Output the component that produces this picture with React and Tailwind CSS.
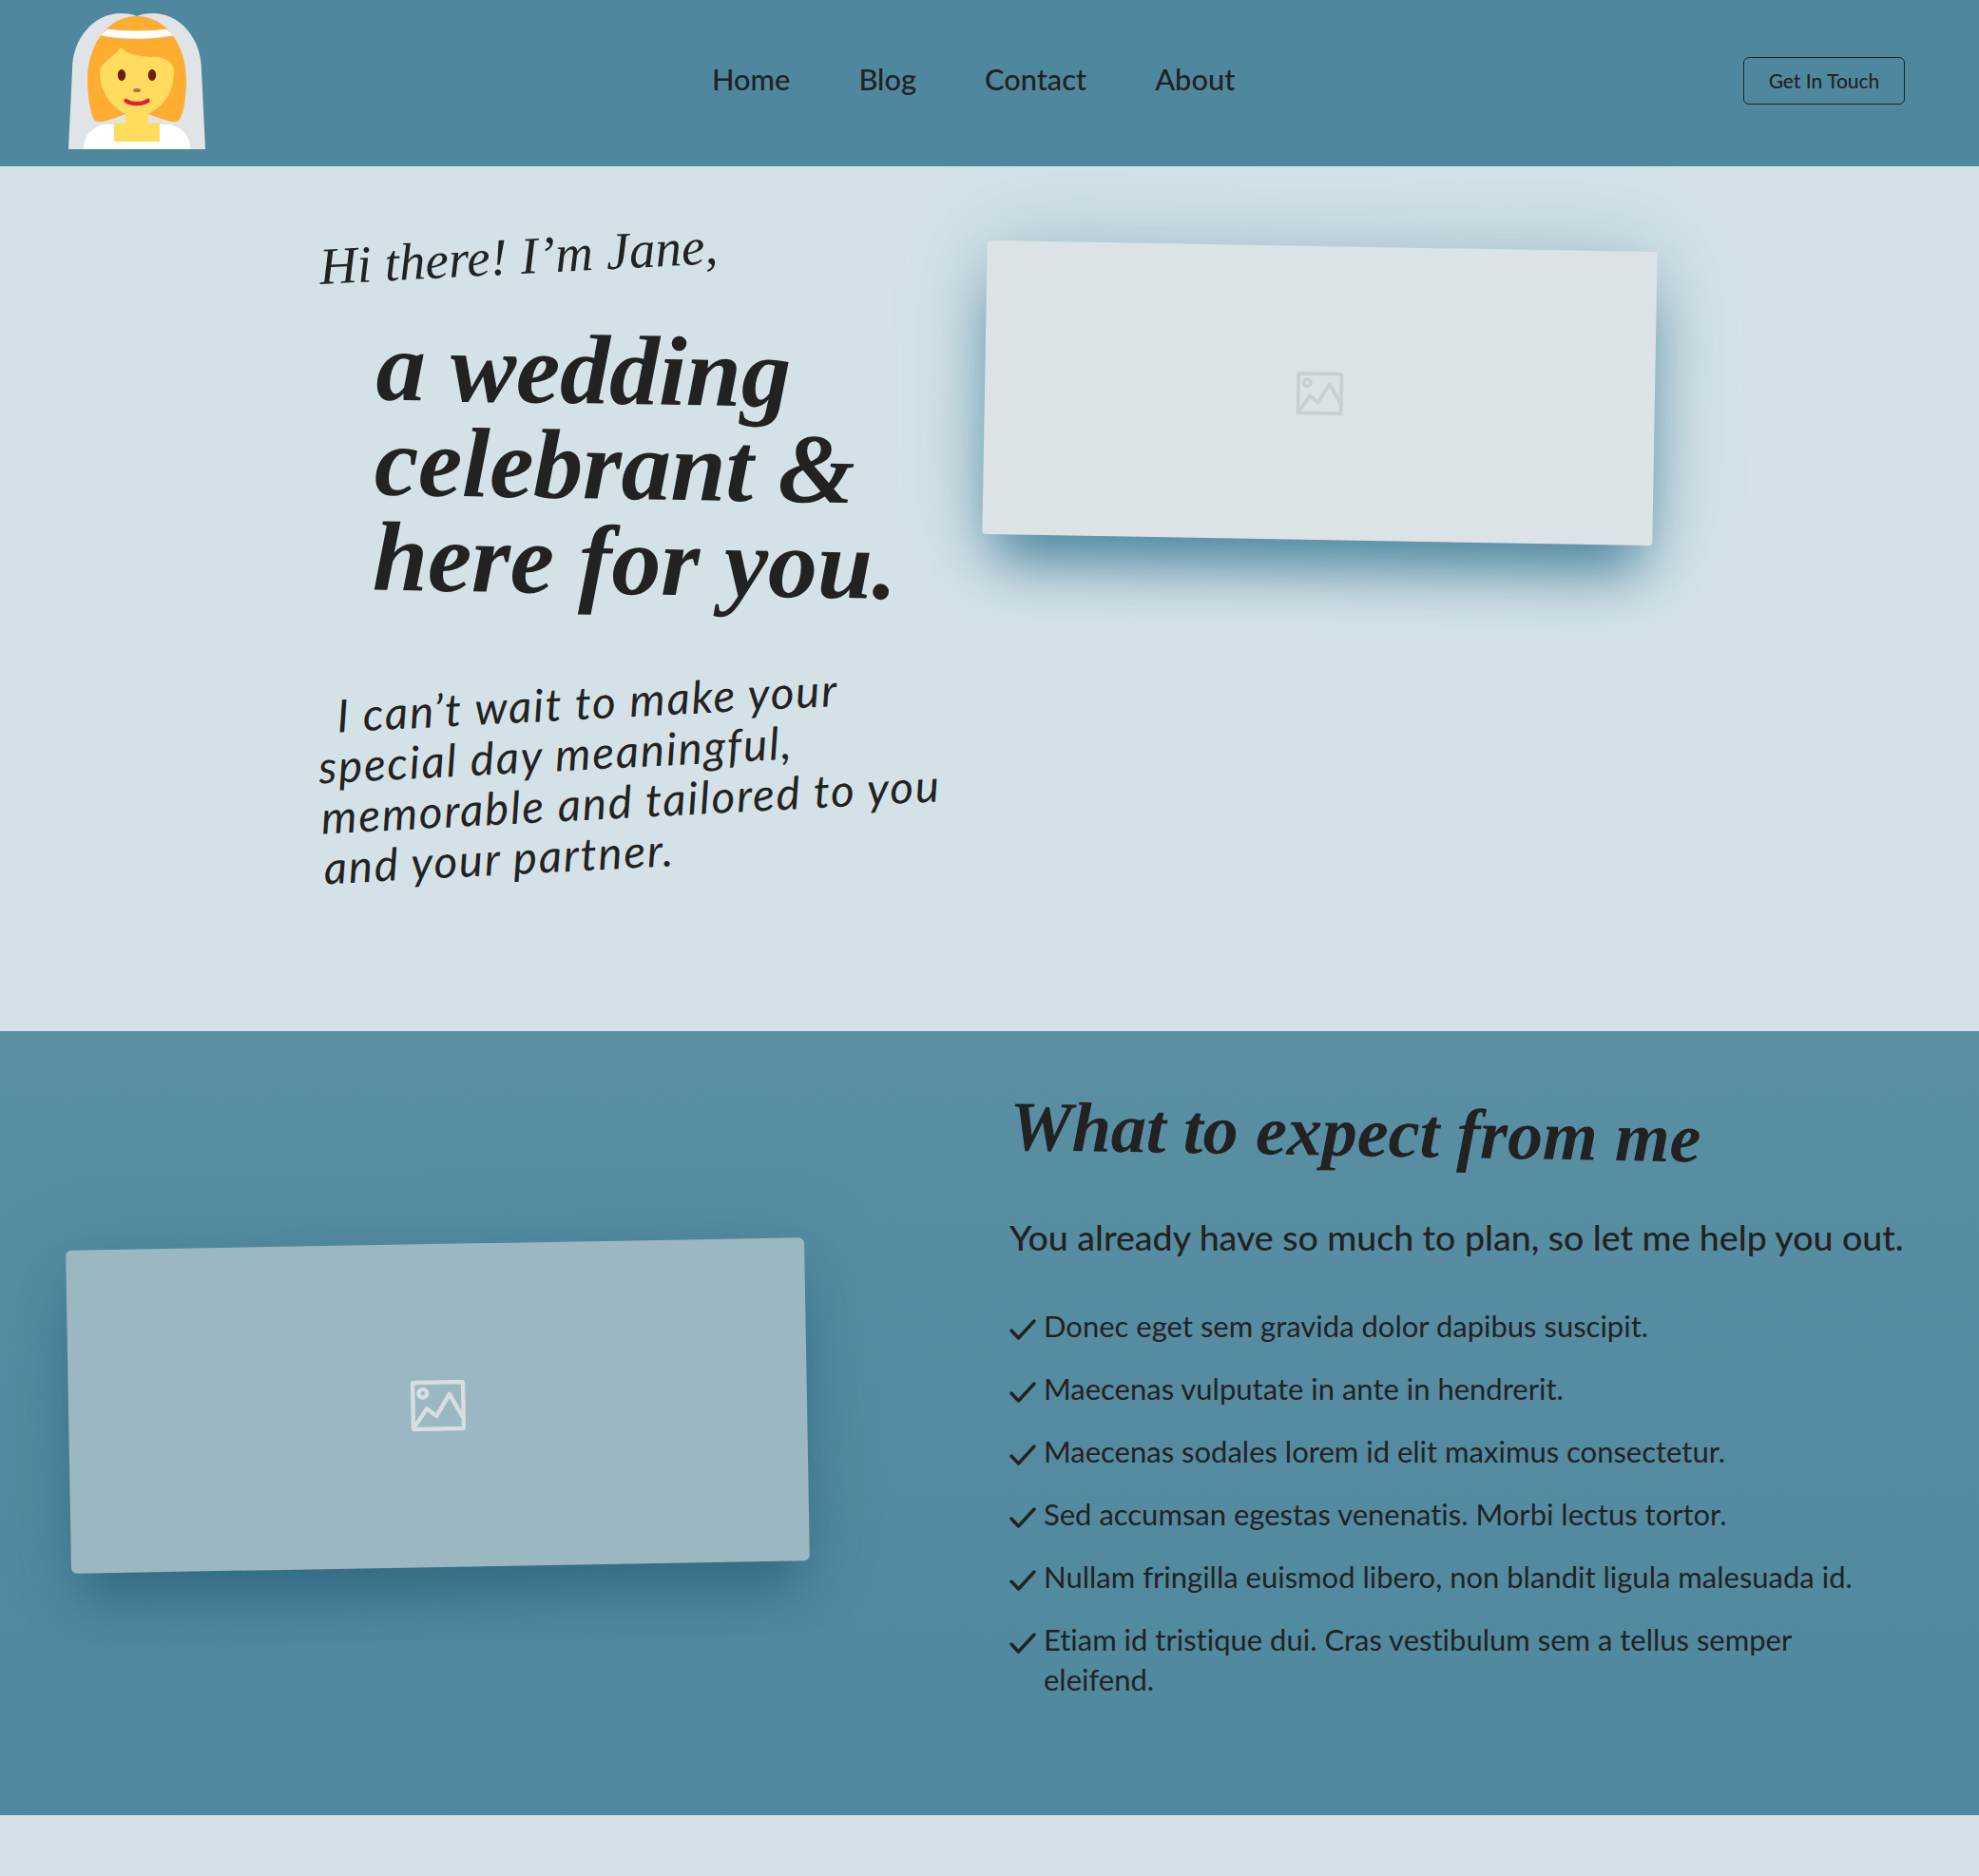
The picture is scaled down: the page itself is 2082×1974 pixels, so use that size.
import React from "react";

const sans = "font-['Lato','Noto_Sans',sans-serif] [font-variant-ligatures:none]";
const script = "font-['Liberation_Serif','Noto_Sans',serif] italic";

function Bride() {
  return (
    <svg viewBox="0 0 144 143" className="w-[144px] h-[143px] block shrink-0">
      <path fill="#E1E4E6" d="M0 143 L4 60 C4 25 28 0 55 0 C62 0 68 1 72 3 C76 1 82 0 89 0 C116 0 140 25 140 60 L144 143 Z" />
      <path fill="#FFAC33" d="M72 3 C40 3 20 35 20 70 C20 85 22 100 26 110 C28 115 32 114 36 114 C45 112 52 109 60 106 L84 106 C92 109 100 112 108 114 C112 114 116 115 118 110 C122 100 124 85 124 70 C124 35 104 3 72 3Z" />
      <path fill="#FFFFFF" d="M41 16.5 C55 19 89 19 103 16.5 L110.5 23 C90 28 54 28 34 23Z" />
      <path fill="#FFFFFF" d="M16 143 C16 128 24 121 36 117 L108 117 C120 121 128 128 128 143Z" />
      <path fill="#FFDC5D" d="M60 100 H84 V115.5 H96 V135 H48 V115.5 H60Z" />
      <path fill="#FFDC5D" d="M55 36 C62 44 78 46 92 46 C104 47 111 52 111 62 C111 88 92 108 72 108 C50 108 33 85 33 62 C33 52 46 48 55 36Z" />
      <ellipse cx="56" cy="65" rx="4.2" ry="6" fill="#662113" />
      <ellipse cx="88" cy="65" rx="4.2" ry="6" fill="#662113" />
      <ellipse cx="72" cy="81" rx="4" ry="2" fill="#C1694F" />
      <path d="M60.5 92 C66 96 78 96 83.5 92" fill="none" stroke="#DF1F32" strokeWidth="4.5" strokeLinecap="round" />
    </svg>
  );
}

function Placeholder({ className, color }) {
  return (
    <svg viewBox="0 0 58 54" className={className} fill="none" stroke={color} strokeWidth="4.4">
      <rect x="2.5" y="2.5" width="53" height="49" rx="1" />
      <circle cx="13" cy="14" r="4.4" />
      <path d="M3 50 L17 30 L27 38 L41 15 L55 40" strokeLinejoin="round" />
    </svg>
  );
}

function Tick() {
  return (
    <svg viewBox="0 0 28 22" className="w-[28px] h-[22px] mt-[14px] mr-[8px] shrink-0" fill="none" stroke="#222222" strokeWidth="3.4" strokeLinecap="round" strokeLinejoin="round">
      <path d="M2 12 L9.5 20 L26 2" />
    </svg>
  );
}

const items = [
  "Donec eget sem gravida dolor dapibus suscipit.",
  "Maecenas vulputate in ante in hendrerit.",
  "Maecenas sodales lorem id elit maximus consectetur.",
  "Sed accumsan egestas venenatis. Morbi lectus tortor.",
  "Nullam fringilla euismod libero, non blandit ligula malesuada id.",
  "Etiam id tristique dui. Cras vestibulum sem a tellus semper eleifend.",
];

export default function App() {
  return (
    <div className={`${sans} w-[2082px] h-[1974px] bg-[#d4e2e8] text-[#222222] overflow-hidden`}>
      <header className="h-[175px] bg-[#4f889e] flex items-center pl-[72px] pr-[78px] pb-[4px]">
        <Bride />
        <nav className="flex items-center gap-[72px] ml-[533px] mb-[3px] text-[30.8px] font-medium">
          <a>Home</a>
          <a>Blog</a>
          <a>Contact</a>
          <a>About</a>
        </nav>
        <button className="ml-auto mb-[1px] w-[170px] h-[50px] rounded-[6px] border border-[#222222] text-[21px] font-medium">Get In Touch</button>
      </header>

      <section className="h-[910px] flex pl-[336px]">
        <div className="w-[700px] flex flex-col">
          <p className={`${script} mt-[74px] text-[55px] leading-[64px] -rotate-3 origin-left w-[440px] whitespace-nowrap`}>Hi there! I’m Jane,</p>
          <h1 className={`${script} mt-[28px] ml-[58px] font-bold text-[104px] leading-[100px] rotate-1 whitespace-nowrap`}>
            a wedding<br />celebrant &amp;<br />here for you.
          </h1>
          <p className="italic mt-[68px] text-[47.5px] leading-[53px] -rotate-3 w-[670px] indent-[22px] tracking-[1.8px] whitespace-nowrap">
            I can’t wait to make your<br />special day meaningful,<br />memorable and tailored to you<br />and your partner.
          </p>
        </div>
        <div className="mt-[84px] w-[705px] h-[309px] rounded-[4px] bg-[#dbe3e7] rotate-1 flex items-center justify-center shadow-[0_40px_60px_-14px_rgba(70,130,155,0.95),0_0_90px_rgba(79,136,158,0.36)]">
          <Placeholder className="w-[51px] h-[46px]" color="#c9cfd3" />
        </div>
      </section>

      <section className="h-[825px] flex bg-gradient-to-b from-[#5a8fa3] to-[#4f889e]">
        <div className="w-[1062px] shrink-0 pl-[72px] pt-[224px]">
          <div className="w-[777px] h-[340px] rounded-[6px] bg-[#9bb7c1] -rotate-1 flex items-center justify-center shadow-[0_40px_56px_-12px_rgba(48,105,130,0.95),0_0_70px_rgba(60,115,138,0.4)]">
            <Placeholder className="w-[58px] h-[54px]" color="#d6dee1" />
          </div>
        </div>
        <div className="flex-1 pr-[78px] pt-[60px]">
          <h2 className={`${script} font-bold text-[74px] leading-[96px] rotate-1 whitespace-nowrap`}>What to expect from me</h2>
          <p className="mt-[38px] text-[37.5px] leading-[46px] font-medium whitespace-nowrap">You already have so much to plan, so let me help you out.</p>
          <ul className="mt-[49px] flex flex-col gap-[24px] text-[31px] leading-[42px]">
            {items.map((t) => (
              <li key={t} className="flex">
                <Tick />
                <span>{t}</span>
              </li>
            ))}
          </ul>
        </div>
      </section>
    </div>
  );
}
